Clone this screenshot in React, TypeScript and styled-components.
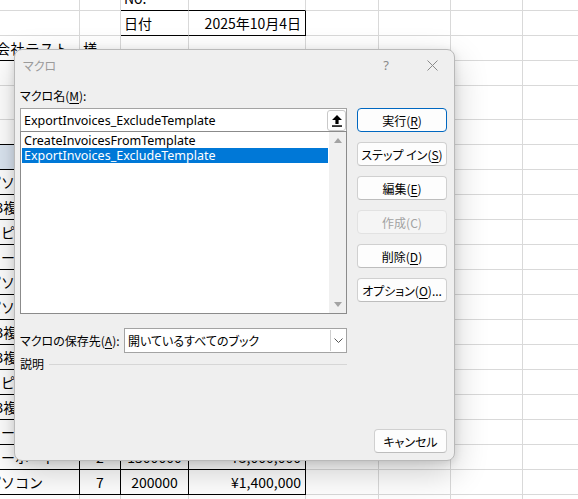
import styled, { createGlobalStyle } from "styled-components";

const GlobalStyle = createGlobalStyle`
  html, body {
    margin: 0;
    padding: 0;
    background: #ffffff;
  }
  body {
    font-family: "Noto Sans CJK JP", "Noto Sans", sans-serif;
  }
`

const Screen = styled.div`
  position: relative;
  width: 578px;
  height: 499px;
  overflow: hidden;
  background: #ffffff;
`

/* ---------- spreadsheet behind the dialog ---------- */

const Sheet = styled.div`
  display: grid;
  grid-template-columns: 96px 41px 68px 117px 73px 72px 72px 72px;
  grid-template-rows: 25px 25px 25px 25px 34px repeat(16, 25px);
  margin-left: -16px;
  margin-top: -14px;
  font-family: "Noto Sans CJK JP", sans-serif;
  font-size: 14px;
  color: #000;
`

type CellProps = {
  $align?: "left" | "center" | "right";
  $fill?: string;
  $right?: boolean;
  $bottom?: boolean;
}

const Cell = styled.div<CellProps>`
  box-sizing: border-box;
  display: flex;
  align-items: center;
  justify-content: ${p => p.$align === "right" ? "flex-end" : p.$align === "center" ? "center" : "flex-start"};
  padding: 0 ${p => p.$align === "right" ? "4px" : "3px"} 0 3px;
  white-space: nowrap;
  overflow: hidden;
  background: ${p => p.$fill || "transparent"};
  border-right: 1px solid ${p => p.$right ? "#000" : "#d9d9d9"};
  border-bottom: 1px solid ${p => p.$bottom ? "#000" : "#d9d9d9"};
`

const CompanyCell = styled(Cell)`
  padding-right: 10px;
  letter-spacing: 0.6px;
`

type CellData = { text?: string; align?: "left" | "center" | "right"; fill?: string; right?: boolean; bottom?: boolean; company?: boolean }

const items: [string, string, string, string][] = [
  ["パソコン", "3", "150000", "¥450,000"],
  ["A3複合機", "1", "800000", "¥800,000"],
  ["コピー用紙", "10", "500", "¥5,000"],
  ["キーボード", "5", "3000", "¥15,000"],
  ["パソコン", "2", "150000", "¥300,000"],
  ["パソコン", "4", "150000", "¥600,000"],
  ["A3複合機", "1", "800000", "¥800,000"],
  ["A3複合機", "2", "800000", "¥1,600,000"],
  ["コピー用紙", "20", "500", "¥10,000"],
  ["A3複合機", "1", "800000", "¥800,000"],
  ["キーボード", "6", "3000", "¥18,000"],
  ["キーボード", "2", "1500000", "¥3,000,000"],
  ["パソコン", "7", "200000", "¥1,400,000"],
]

const buildRows = (): CellData[][] => {
  const blank = (): CellData[] => Array.from({ length: 8 }, () => ({}))
  const rows: CellData[][] = []
  const r0 = blank()
  r0[2] = { text: "No.", bottom: true }
  r0[3] = { bottom: true }
  rows.push(r0)
  const r1 = blank()
  r1[2] = { text: "日付", bottom: true }
  r1[3] = { text: "2025年10月4日", align: "right", bottom: true, right: true }
  rows.push(r1)
  const r2 = blank()
  r2[0] = { text: "株式会社テスト", align: "right", bottom: true, company: true }
  r2[1] = { text: "様" }
  rows.push(r2)
  rows.push(blank())
  rows.push(blank())
  const r5 = blank()
  for (let i = 0; i < 4; i++) r5[i] = { bottom: true }
  rows.push(r5)
  const head = blank()
  const labels = ["品名", "数量", "単価", "金額"]
  for (let i = 0; i < 4; i++) head[i] = { text: labels[i], align: "center", fill: "#dce6f2", right: true, bottom: true }
  rows.push(head)
  items.forEach(it => {
    const r = blank()
    r[0] = { text: it[0], right: true, bottom: true }
    r[1] = { text: it[1], align: "center", right: true, bottom: true }
    r[2] = { text: it[2], align: "center", right: true, bottom: true }
    r[3] = { text: it[3], align: "right", right: true, bottom: true }
    rows.push(r)
  })
  rows.push(blank())
  rows.push(blank())
  return rows
}

/* ---------- the macro dialog ---------- */

const Dialog = styled.div`
  position: absolute;
  left: 14px;
  top: 49px;
  width: 441px;
  height: 412px;
  box-sizing: border-box;
  display: flex;
  flex-direction: column;
  background: #efefef;
  border: 1px solid #b9b9b9;
  border-radius: 8px;
  box-shadow: 0 12px 34px rgba(0, 0, 0, 0.2), 0 2px 8px rgba(0, 0, 0, 0.12);
  font-family: "Noto Sans CJK JP", sans-serif;
  font-feature-settings: "palt";
  font-size: 12px;
  color: #000;
`

const TitleBar = styled.div`
  height: 30px;
  display: flex;
  align-items: center;
  padding: 0 14px 0 8px;
`

const Title = styled.div`
  flex: 1;
  font-size: 12px;
  color: #9b9b9b;
`

const TitleButton = styled.div`
  width: 16px;
  height: 16px;
  display: flex;
  align-items: center;
  justify-content: center;
  color: #8a8a8a;
  font-family: "Noto Sans", sans-serif;
  font-size: 13px;
  & + & {
    margin-left: 30px;
  }
`

const Main = styled.div`
  display: grid;
  grid-template-columns: 327px 90px;
  column-gap: 10px;
  padding: 0 8px 0 5px;
`

const LeftColumn = styled.div`
  display: flex;
  flex-direction: column;
`

const Label = styled.div`
  height: 16px;
  line-height: 16px;
  white-space: nowrap;
  u {
    text-decoration-thickness: 1px;
    text-underline-offset: 2px;
  }
`

const NameLabel = styled(Label)`
  margin-top: 8px;
`

const NameField = styled.div`
  margin-top: 4px;
  height: 23px;
  box-sizing: border-box;
  display: flex;
  align-items: center;
  background: #fff;
  border: 1px solid #a3a3a3;
  border-bottom: none;
`

const LatinText = styled.div`
  flex: 1;
  padding-left: 3px;
  font-family: "Noto Sans", sans-serif;
  font-size: 12.5px;
  white-space: nowrap;
`

const UpButton = styled.div`
  width: 19px;
  height: 21px;
  box-sizing: border-box;
  display: flex;
  align-items: center;
  justify-content: center;
  border: 1px solid #c9c9c9;
  border-radius: 3px;
  background: #fff;
  margin-top: 1px;
`

const ListBox = styled.div`
  height: 183px;
  box-sizing: border-box;
  display: flex;
  background: #fff;
  border: 1px solid #8b8b8b;
`

const ListItems = styled.div`
  flex: 1;
  padding: 1px;
`

const ListItem = styled.div<{ $selected?: boolean }>`
  height: 15px;
  line-height: 15px;
  padding-left: 2px;
  font-family: "Noto Sans", sans-serif;
  font-size: 12.5px;
  white-space: nowrap;
  background: ${p => p.$selected ? "#0078d7" : "transparent"};
  color: ${p => p.$selected ? "#ffffff" : "#000000"};
`

const ScrollBar = styled.div`
  width: 17px;
  display: flex;
  flex-direction: column;
  justify-content: space-between;
  align-items: center;
  padding: 6px 0;
  background: #f0f0f0;
`

const Arrow = styled.div<{ $down?: boolean }>`
  width: 0;
  height: 0;
  border-left: 4px solid transparent;
  border-right: 4px solid transparent;
  ${p => p.$down ? "border-top: 5px solid #a3a3a3;" : "border-bottom: 5px solid #a3a3a3;"}
`

const LocationRow = styled.div`
  margin-top: 14px;
  display: flex;
  align-items: center;
`

const LocationLabel = styled(Label)`
  width: 104px;
  flex-shrink: 0;
`

const Select = styled.div`
  flex: 1;
  height: 25px;
  box-sizing: border-box;
  display: flex;
  align-items: stretch;
  background: #fff;
  border: 1px solid #a3a3a3;
`

const SelectValue = styled.div`
  flex: 1;
  display: flex;
  align-items: center;
  padding-left: 3px;
  white-space: nowrap;
`

const Chevron = styled.div`
  width: 15px;
  display: flex;
  align-items: center;
  justify-content: center;
  border-left: 1px solid #cfcfcf;
  margin: 1px 0;
`

const DescriptionRow = styled.div`
  margin-top: 4px;
  display: flex;
  align-items: center;
  height: 14px;
`

const Rule = styled.div`
  flex: 1;
  height: 1px;
  margin-left: 5px;
  background: #d6d6d6;
`

const ButtonColumn = styled.div`
  padding-top: 28px;
  display: flex;
  flex-direction: column;
  gap: 10px;
`

const Button = styled.div<{ $primary?: boolean; $disabled?: boolean; $width?: number }>`
  height: 24px;
  width: ${p => p.$width ? `${p.$width}px` : "auto"};
  box-sizing: border-box;
  display: flex;
  align-items: center;
  justify-content: center;
  white-space: nowrap;
  border-radius: 4px;
  background: ${p => p.$disabled ? "#f5f5f5" : "#fdfdfd"};
  border: 1px solid ${p => p.$primary ? "#0067c0" : p.$disabled ? "#e2e2e2" : "#d0d0d0"};
  border-bottom-color: ${p => p.$primary ? "#0067c0" : p.$disabled ? "#e2e2e2" : "#bdbdbd"};
  color: ${p => p.$disabled ? "#a2a2a2" : "#000"};
  u {
    text-decoration-thickness: 1px;
    text-underline-offset: 2px;
  }
`

const Footer = styled.div`
  margin-top: auto;
  display: flex;
  justify-content: flex-end;
  padding: 0 7px 7px 0;
`

const App = () => {
  const rows = buildRows()
  return (
    <>
      <GlobalStyle />
      <Screen>
        <Sheet>
          {rows.map((row, ri) =>
            row.map((c, ci) => {
              const C = c.company ? CompanyCell : Cell
              return (
                <C key={`${ri}-${ci}`} $align={c.align} $fill={c.fill} $right={c.right} $bottom={c.bottom}>
                  {c.text}
                </C>
              )
            })
          )}
        </Sheet>

        <Dialog>
          <TitleBar>
            <Title>マクロ</Title>
            <TitleButton>?</TitleButton>
            <TitleButton>
              <svg width="11" height="11" viewBox="0 0 11 11">
                <path d="M0.5 0.5 L10.5 10.5 M10.5 0.5 L0.5 10.5" stroke="#8a8a8a" strokeWidth="1" fill="none" />
              </svg>
            </TitleButton>
          </TitleBar>
          <Main>
            <LeftColumn>
              <NameLabel>マクロ名(<u>M</u>):</NameLabel>
              <NameField>
                <LatinText>ExportInvoices_ExcludeTemplate</LatinText>
                <UpButton>
                  <svg width="10" height="12" viewBox="0 0 10 12">
                    <path d="M5 0 L10 5 H6.6 V9 H3.4 V5 H0 Z" fill="#000" />
                    <rect x="0" y="10.3" width="10" height="1.5" fill="#000" />
                  </svg>
                </UpButton>
              </NameField>
              <ListBox>
                <ListItems>
                  <ListItem>CreateInvoicesFromTemplate</ListItem>
                  <ListItem $selected>ExportInvoices_ExcludeTemplate</ListItem>
                </ListItems>
                <ScrollBar>
                  <Arrow />
                  <Arrow $down />
                </ScrollBar>
              </ListBox>
              <LocationRow>
                <LocationLabel>マクロの保存先(<u>A</u>):</LocationLabel>
                <Select>
                  <SelectValue>開いているすべてのブック</SelectValue>
                  <Chevron>
                    <svg width="9" height="5" viewBox="0 0 9 5">
                      <path d="M0.5 0.5 L4.5 4.5 L8.5 0.5" stroke="#555" strokeWidth="1" fill="none" />
                    </svg>
                  </Chevron>
                </Select>
              </LocationRow>
              <DescriptionRow>
                <Label>説明</Label>
                <Rule />
              </DescriptionRow>
            </LeftColumn>
            <ButtonColumn>
              <Button $primary>実行(<u>R</u>)</Button>
              <Button>ステップ イン(<u>S</u>)</Button>
              <Button>編集(<u>E</u>)</Button>
              <Button $disabled>作成(C)</Button>
              <Button>削除(<u>D</u>)</Button>
              <Button>オプション(<u>O</u>)...</Button>
            </ButtonColumn>
          </Main>
          <Footer>
            <Button $width={73}>キャンセル</Button>
          </Footer>
        </Dialog>
      </Screen>
    </>
  )
}

export default App
